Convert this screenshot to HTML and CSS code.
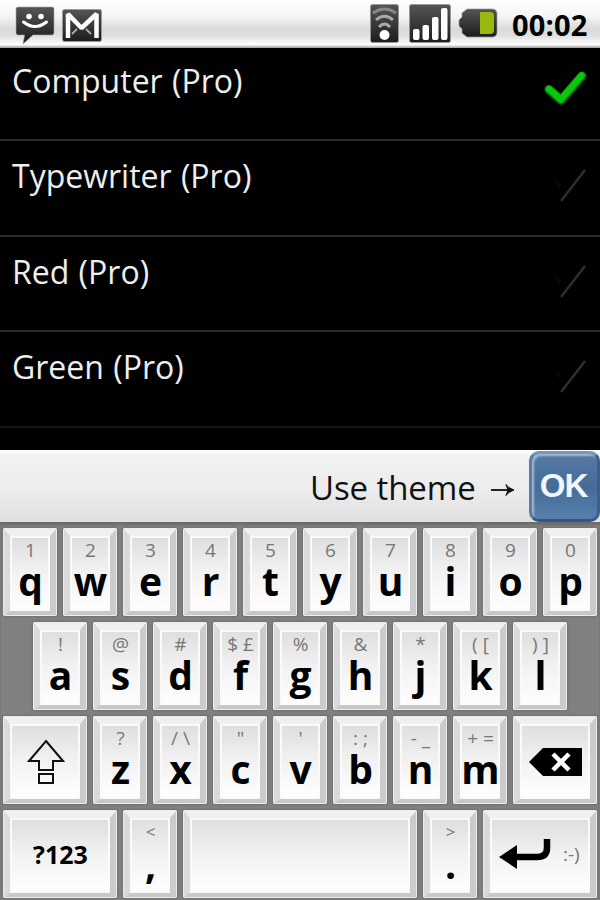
FILE: index.html
```html
<!DOCTYPE html>
<html lang="en">
<head>
  <meta charset="UTF-8" />
  <meta name="viewport" content="width=device-width, initial-scale=1.0" />
  <title>Keyboard themes</title>
  <link rel="stylesheet" href="styles.css">
</head>

<body>

  <!-- Status bar -->
  <div class="status-bar">
    <svg class="icon-sms" width="42" height="38" viewBox="0 0 42 38">
      <defs>
        <linearGradient id="dark" x1="0" y1="0" x2="0" y2="1">
          <stop offset="0" stop-color="#555" />
          <stop offset="1" stop-color="#1c1c1c" />
        </linearGradient>
      </defs>
      <path d="M3 1H37Q39 1 39 3V27Q39 29 37 29H18L8 38L9.500 29H3Q1 29 1 27V3Q1 1 3 1Z" fill="url(#dark)" stroke="#aaa" stroke-width="0.600" />
      <circle cx="14" cy="10.500" r="2.800" fill="#fff" />
      <circle cx="26" cy="10.500" r="2.800" fill="#fff" />
      <path d="M8.500 16Q20 25 31.500 16" fill="none" stroke="#fff" stroke-width="3" stroke-linecap="round" />
    </svg>
    <svg class="icon-mail" width="40" height="33" viewBox="0 0 40 33">
      <rect x="0.500" y="0.500" width="39" height="32" rx="2" fill="url(#dark)" stroke="#999" />
      <path d="M10 25L15 20M29 25L24 20" stroke="#aaa" stroke-width="1.800" />
      <path d="M6 29V5L19.500 19L34.500 5V29" fill="none" stroke="#fff" stroke-width="4.500" stroke-linejoin="bevel" />
    </svg>

    <svg class="icon-wifi" width="29" height="39" viewBox="0 0 29 39">
      <rect x="0.500" y="0.500" width="28" height="38" rx="2" fill="url(#dark)" stroke="#999" />
      <path d="M3 9Q14.500 1 26 9" fill="none" stroke="#888" stroke-width="3" />
      <path d="M6 16Q14.500 8.500 23 16" fill="none" stroke="#aaa" stroke-width="3" />
      <path d="M9 23Q14.500 17 20 23" fill="none" stroke="#aaa" stroke-width="3" />
      <circle cx="14.500" cy="31" r="5" fill="#fff" />
    </svg>
    <svg class="icon-signal" width="42" height="39" viewBox="0 0 42 39">
      <rect x="0.500" y="0.500" width="41" height="38" rx="2" fill="url(#dark)" stroke="#999" />
      <g fill="#fff">
        <rect x="4" y="25" width="6.500" height="11" rx="2" />
        <rect x="13.500" y="21" width="6.500" height="15" rx="2" />
        <rect x="23" y="13" width="6.500" height="23" rx="2" />
        <rect x="32" y="4" width="6.500" height="32" rx="2" />
      </g>
    </svg>
    <svg class="icon-battery" width="40" height="30" viewBox="0 0 40 30">
      <path d="M9 1H34Q39 1 39 6V24Q39 29 34 29H9L4 25V21L1 18V12L4 9V5Z" fill="url(#dark)" stroke="#999" stroke-width="0.700" />
      <path d="M22 4H32Q36 4 36 8V22Q36 26 32 26H22Z" fill="#98b80e" />
    </svg>
    <span class="clock">00:02</span>
  </div>

  <!-- Theme list -->
  <ul class="theme-list">
    <li class="theme">
      <span class="theme-name">Computer (Pro)</span>
      <svg class="check" width="44" height="40" viewBox="0 0 44 40">
        <path d="M5 20.500L17 31L38 7" fill="none" stroke="#087008" stroke-width="9" stroke-linejoin="round" stroke-linecap="round" />
        <path d="M5 20L17 30.500L37.500 6.500" fill="none" stroke="#08c80c" stroke-width="6.500" stroke-linejoin="round" stroke-linecap="round" />
      </svg>
    </li>
    <li class="theme">
      <span class="theme-name">Typewriter (Pro)</span>
      <svg class="check" width="44" height="40" viewBox="0 0 44 40">
        <path d="M17 37L41 6" stroke="#2e2e2e" stroke-width="2.500" />
        <path d="M12 17L16 22" stroke="#0d0d0d" stroke-width="2" />
      </svg>
    </li>
    <li class="theme">
      <span class="theme-name">Red (Pro)</span>
      <svg class="check" width="44" height="40" viewBox="0 0 44 40">
        <path d="M17 37L41 6" stroke="#2e2e2e" stroke-width="2.500" />
        <path d="M12 17L16 22" stroke="#0d0d0d" stroke-width="2" />
      </svg>
    </li>
    <li class="theme">
      <span class="theme-name">Green (Pro)</span>
      <svg class="check" width="44" height="40" viewBox="0 0 44 40">
        <path d="M17 37L41 6" stroke="#2e2e2e" stroke-width="2.500" />
        <path d="M12 17L16 22" stroke="#0d0d0d" stroke-width="2" />
      </svg>
    </li>
  </ul>

  <!-- Candidate bar -->
  <div class="prompt-bar">
    <span class="prompt-text">Use theme</span>
    <svg class="arrow" width="24" height="14" viewBox="0 0 24 14">
      <path d="M0 7H20" stroke="#111" stroke-width="1.800" />
      <path d="M15 1.500Q17 5 23 7Q17 9 15 12.500L17 7Z" fill="#111" stroke="#111" />
    </svg>
    <button class="ok-btn">OK</button>
  </div>

  <!-- Keyboard -->
  <div class="keyboard">
    <div class="row">
      <div class="key"><small>1</small><b>q</b></div>
      <div class="key"><small>2</small><b>w</b></div>
      <div class="key"><small>3</small><b>e</b></div>
      <div class="key"><small>4</small><b>r</b></div>
      <div class="key"><small>5</small><b>t</b></div>
      <div class="key"><small>6</small><b>y</b></div>
      <div class="key"><small>7</small><b>u</b></div>
      <div class="key"><small>8</small><b>i</b></div>
      <div class="key"><small>9</small><b>o</b></div>
      <div class="key"><small>0</small><b>p</b></div>
    </div>
    <div class="row row-home">
      <div class="key"><small>!</small><b>a</b></div>
      <div class="key"><small>@</small><b>s</b></div>
      <div class="key"><small>#</small><b>d</b></div>
      <div class="key"><small>$ £</small><b>f</b></div>
      <div class="key"><small>%</small><b>g</b></div>
      <div class="key"><small>&amp;</small><b>h</b></div>
      <div class="key"><small>*</small><b>j</b></div>
      <div class="key"><small>( [</small><b>k</b></div>
      <div class="key"><small>) ]</small><b>l</b></div>
    </div>
    <div class="row">
      <div class="key key-shift">
        <svg width="38" height="46" viewBox="0 0 38 46">
          <path d="M19 2L36 22H26V31H12V22H2Z" fill="none" stroke="#111" stroke-width="2" />
          <rect x="12" y="35" width="14" height="9" fill="none" stroke="#111" stroke-width="2" />
        </svg>
      </div>
      <div class="key"><small>?</small><b>z</b></div>
      <div class="key"><small>/ \</small><b>x</b></div>
      <div class="key"><small>"</small><b>c</b></div>
      <div class="key"><small>'</small><b>v</b></div>
      <div class="key"><small>: ;</small><b>b</b></div>
      <div class="key"><small>- _</small><b>n</b></div>
      <div class="key"><small>+ =</small><b>m</b></div>
      <div class="key key-delete">
        <svg width="53" height="28" viewBox="0 0 53 28">
          <path d="M0 14L14 0H53V28H14Z" fill="#000" />
          <path d="M24 6L40 22M40 6L24 22" stroke="#fff" stroke-width="4.500" />
        </svg>
      </div>
    </div>
    <div class="row">
      <div class="key key-symbols">?123</div>
      <div class="key key-punct"><small>&lt;</small><b>,</b></div>
      <div class="key key-space"></div>
      <div class="key key-punct"><small>&gt;</small><b>.</b></div>
      <div class="key key-enter">
        <svg width="54" height="34" viewBox="0 0 54 34">
          <path d="M15 20H38Q48 20 48 11V2" fill="none" stroke="#000" stroke-width="6.500" />
          <path d="M0 20L18 8V32Z" fill="#000" />
        </svg>
        <small>:-)</small>
      </div>
    </div>
  </div>

</body>
</html>
```

FILE: styles.css
```css
* {
  box-sizing: border-box;
}
body {
  margin: 0;
  width: 600px;
  height: 900px;
  overflow: hidden;
  background: #000;
  font-family: "Open Sans", "Noto Sans", sans-serif;
}
.status-bar {
  display: flex;
  align-items: flex-start;
  height: 48px;
  padding: 4px 11px 0 15px;
  background: linear-gradient(#fff, #f4f4f4 35%, #dadada 60%, #e0e0e0 75%, #fff 93%, #999);
}
.icon-sms {
  margin-top: 2px;
}
.icon-mail {
  margin: 5px 0 0 5px;
}
.icon-wifi {
  margin-left: auto;
}
.icon-signal {
  margin-left: 10px;
}
.icon-battery {
  margin: 4px 0 0 7px;
}
.clock {
  width: 77px;
  margin-left: 14px;
  font-size: 29px;
  font-weight: bold;
  line-height: 42px;
  letter-spacing: 0.2px;
  white-space: nowrap;
}
.theme-list {
  height: 402px;
  margin: 0;
  padding: 0;
  overflow: hidden;
  list-style: none;
}
.theme {
  display: flex;
  justify-content: space-between;
  height: 95.6px;
  padding: 12px 12px 0;
  border-bottom: 2px solid #2b2b2b;
}
.theme:first-child {
  height: 93px;
  padding-top: 10px;
}
.theme:last-child {
  border-color: #161616;
}
.theme-name {
  color: #eee;
  font-size: 32px;
  font-weight: 500;
  line-height: 46px;
  word-spacing: 1px;
}
.check {
  margin-top: 11px;
}
.prompt-bar {
  display: flex;
  align-items: center;
  height: 72px;
  padding-left: 310px;
  background: linear-gradient(#fff, #f2f2f2 8%, #ebebeb 60%, #e0e0e0);
}
.prompt-text {
  width: 167px;
  padding-top: 2px;
  font-size: 33px;
  letter-spacing: -0.1px;
  white-space: nowrap;
  color: #111;
}
.arrow {
  margin: 7px 0 0 14px;
}
.ok-btn {
  width: 71px;
  height: 71px;
  margin-left: auto;
  padding: 0 2px 0 0;
  border: 3px solid;
  border-color: #7896b8 #3e5f87 #36577e #5b7ca3;
  border-radius: 10px;
  background: linear-gradient(#557aa5, #476b98 50%, #5580ad);
  box-shadow: inset 2px 2px 2px #a3bad2;
  color: #eef6ff;
  font: bold 33px "Liberation Sans", sans-serif;
  letter-spacing: -1px;
}
.keyboard {
  display: flex;
  flex-direction: column;
  gap: 6px;
  height: 378px;
  padding: 6px 3px 2px;
  background: #808080;
  box-shadow: inset 0 3px 2px #6c6c6c;
}
.row {
  display: flex;
  flex: 1;
  gap: 6px;
}
.row-home {
  padding: 0 30px;
}
.key {
  display: flex;
  flex-direction: column;
  align-items: center;
  width: 54px;
  padding-left: 1px;
  border: solid;
  border-width: 8px 7px 5px 7px;
  border-color: #f0f0f0 #cbcbcb #c8c8c8 #dadada;
  border-radius: 2px;
  background: linear-gradient(#dedede, #f2f2f2 50%, #fff);
  box-shadow: 0 0 2px 1px #707070, inset 0 0 0 2px #fafafa;
  outline: 1px solid #ececec;
  outline-offset: -1px;
}
.key small {
  color: #777;
  font-size: 19px;
  line-height: 28px;
  white-space: nowrap;
}
.key b {
  font-size: 39px;
  line-height: 34px;
}
.key-shift,
.key-delete {
  width: 84px;
  justify-content: center;
}
.key-symbols {
  width: 114px;
  padding-bottom: 4px;
  justify-content: center;
  font-size: 25px;
  font-weight: bold;
}
.key-punct small {
  font-size: 17px;
}
.key-punct b {
  line-height: 36px;
}
.key-space {
  width: 234px;
}
.key-enter {
  width: 114px;
  flex-direction: row;
  justify-content: flex-start;
  gap: 10px;
  padding: 0 0 3px 9px;
}
```
